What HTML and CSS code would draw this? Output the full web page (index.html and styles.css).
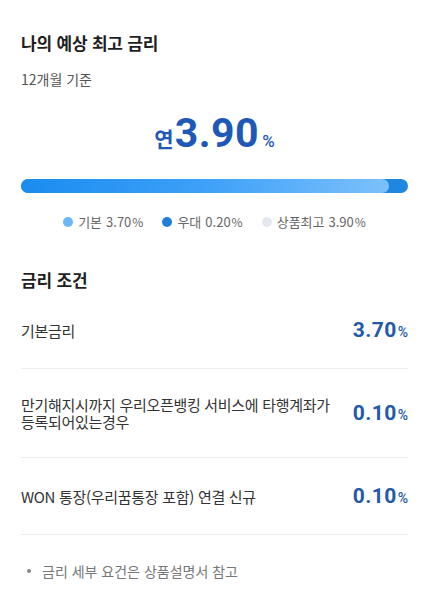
FILE: index.html
```html
<!DOCTYPE html>
<html lang="ko">
<head>
<meta charset="utf-8">
<link rel="stylesheet" href="styles.css">
</head>
<body>
<main class="page">
  <section class="summary">
    <h1 class="title">나의 예상 최고 금리</h1>
    <p class="sub">12개월 기준</p>
    <div class="rate"><span class="rate-pre">연</span><span class="rate-num">3.90</span><span class="rate-pct">%</span></div>
    <div class="bar"><div class="bar-fill" style="width:95%"></div></div>
    <ul class="legend">
      <li><span class="dot dot-base"></span>기본 <span class="num">3.70</span><span class="pct">%</span></li>
      <li><span class="dot dot-pref"></span>우대 <span class="num">0.20</span><span class="pct">%</span></li>
      <li><span class="dot dot-max"></span>상품최고 <span class="num">3.90</span><span class="pct">%</span></li>
    </ul>
  </section>
  <section class="cond">
    <h2 class="title">금리 조건</h2>
    <div class="row">
      <div class="label">기본금리</div>
      <div class="val"><span class="num">3.70</span><span class="pct">%</span></div>
    </div>
    <div class="row">
      <div class="label">만기해지시까지 우리오픈뱅킹 서비스에 타행계좌가 등록되어있는경우</div>
      <div class="val"><span class="num">0.10</span><span class="pct">%</span></div>
    </div>
    <div class="row">
      <div class="label">WON 통장(우리꿈통장 포함) 연결 신규</div>
      <div class="val"><span class="num">0.10</span><span class="pct">%</span></div>
    </div>
    <ul class="notes">
      <li>금리 세부 요건은 상품설명서 참고</li>
    </ul>
  </section>
</main>
</body>
</html>
```
FILE: styles.css
```css
* { box-sizing: border-box; }
html, body { margin: 0; padding: 0; background: #fff; }
body {
  font-family: "Noto Sans CJK KR", "Noto Sans", sans-serif;
  color: #222;
  -webkit-font-smoothing: antialiased;
}
.page { padding: 31px 20px 0 21px; }
.title {
  margin: 0;
  font-size: 17px;
  line-height: 24px;
  font-weight: 700;
  color: #1f1f1f;
  letter-spacing: -0.2px;
}
.sub {
  margin: 14px 0 0;
  font-size: 14px;
  line-height: 20px;
  color: #555;
}
.rate {
  margin-top: 20px;
  display: flex;
  justify-content: center;
  align-items: baseline;
  color: #1e59b7;
  font-weight: 700;
}
.rate-pre { font-size: 21px; margin-right: 1px; }
.rate-num { font-family: Roboto, sans-serif; font-size: 41px; line-height: 48px; letter-spacing: 0.5px; }
.rate-pct { font-family: Roboto, sans-serif; font-size: 17px; font-weight: 500; margin-left: 3px; }
.bar {
  margin-top: 22px;
  height: 14px;
  border-radius: 7px;
  background: #1f87e0;
  overflow: hidden;
}
.bar-fill {
  height: 100%;
  border-radius: 7px;
  background: linear-gradient(90deg, #1a8cf0 0%, #3ea0f8 50%, #7cc1fb 100%);
}
.legend {
  list-style: none;
  margin: 20px 0 0;
  padding: 0;
  display: flex;
  justify-content: center;
  gap: 19px;
  font-size: 13px;
  line-height: 18px;
  color: #666;
}
.legend li { display: flex; align-items: center; }
.legend .num { margin-left: 4px; }
.legend .pct { font-size: 12px; margin-left: 1px; }
.dot {
  width: 10px; height: 10px; border-radius: 50%;
  margin-right: 5px;
}
.dot-base { background: #6bb8f7; }
.dot-pref { background: #1f7fd9; }
.dot-max { background: #e3e8ef; }
.cond { margin-top: 37px; }
.row {
  display: flex;
  align-items: center;
  justify-content: space-between;
  gap: 16px;
  border-bottom: 1px solid #eceef1;
  padding: 27px 0;
}
.label {
  flex: 1;
  font-size: 15px;
  line-height: 17px;
  color: #333;
  letter-spacing: -0.3px;
}
.val {
  display: flex;
  align-items: baseline;
  height: 22px;
  color: #2359a9;
  font-weight: 700;
  white-space: nowrap;
  font-family: Roboto, sans-serif;
}
.val .num { font-size: 21px; line-height: 22px; letter-spacing: 0.4px; }
.val .pct { font-size: 14px; line-height: 22px; font-weight: 500; margin-left: 1px; }
.notes {
  list-style: none;
  margin: 26px 0 0;
  padding: 0;
  font-size: 14px;
  line-height: 20px;
  color: #777;
}
.notes li { position: relative; padding-left: 21px; }
.notes li::before {
  content: "";
  position: absolute;
  left: 6px; top: 8px;
  width: 4px; height: 4px; border-radius: 50%;
  background: #888;
}
```
